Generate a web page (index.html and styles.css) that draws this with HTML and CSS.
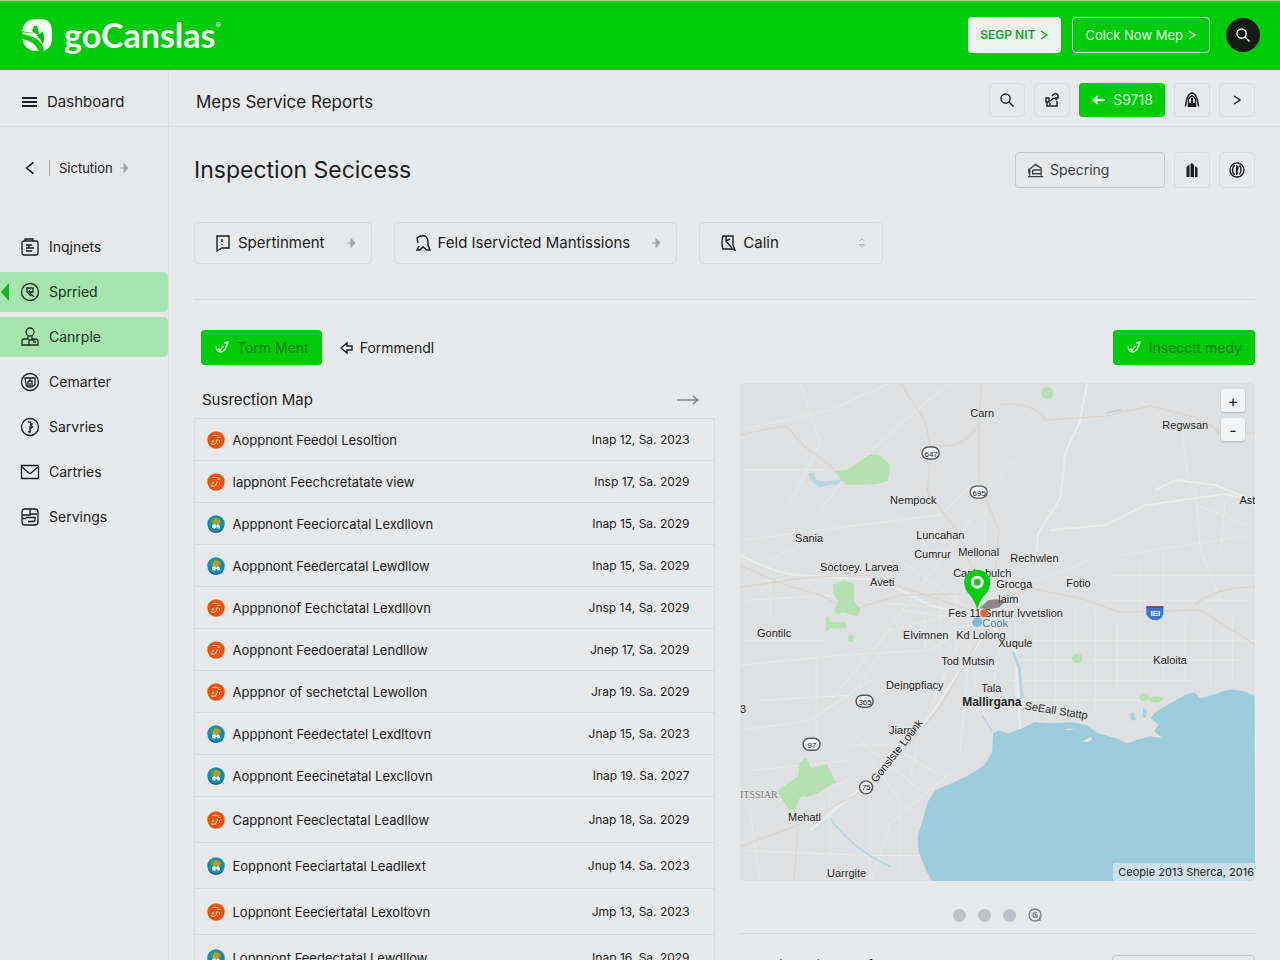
FILE: index.html
```html
<!DOCTYPE html>
<html lang="en">
<head>
<meta charset="utf-8">
<meta name="viewport" content="width=device-width, initial-scale=1">
<title>Meps Service Reports</title>
<link rel="stylesheet" href="styles.css">
</head>
<body>
<svg class="sprite" aria-hidden="true">
  <symbol id="search" viewBox="0 0 16 16"><circle cx="6.6" cy="6.6" r="4.6"/><path d="M10 10l4.5 4.5"/></symbol>
  <symbol id="chevron" viewBox="0 0 10 12"><path d="M2 2l6 4-6 4"/></symbol>
  <symbol id="caret" viewBox="0 0 10 12"><path d="M1 6h7M5 1.5v9L9 6z" fill="currentColor"/></symbol>
  <symbol id="orange" viewBox="0 0 18 18"><circle cx="9" cy="9" r="8.7" fill="#ee5208"/><path d="M5.500 4.500q4-.8 6 .8M4 12.500q3 2 5-.5l1.500-4M11 6.500l2.500-.5M12.500 9v3M7 9l-2 2" fill="none" stroke="#ffd0b4" stroke-width="1.200"/></symbol>
  <symbol id="globe" viewBox="0 0 18 18"><circle cx="9" cy="9" r="8.7" fill="#0e8fa8"/><path d="M1 12q8 9 16 0-2 5.500-8 5.700Q3 17.500 1 12z" fill="#1356a8"/><path d="M5 8q0-4 4-5 4 0 5 4l-3 3H7z" fill="#b79a2c"/><path d="M3 6q2-4 5-4L6 6l-1 4z" fill="#2fa56a"/><path d="M5 13v-3l3-1 1 2 2-2 2 2v2l-2 1-1-2h-1l-1 2z" fill="#e4f6ff"/></symbol>
  <symbol id="tick" viewBox="0 0 16 16"><path d="M2 6.500q1 6 5 5.500 5-1 6-9M10 3l4-1-1 4M4 9l3 1M5.500 11l4-5"/></symbol>
</svg>

<header class="topbar">
  <a class="brand" href="#" aria-label="goCanslas">
    <svg class="brand-mark" viewBox="0 0 30 32">
      <path d="M0 12Q2 0 14 0h4q12 0 12 13v6q0 10-8 13-1-9-9-13-6-3-13-4l1-2q6 2 10 1-7-1-11-2z" fill="#f3fff3"/>
      <path d="M10 12l2-5q3-1 4 2l1 6q-4 1-7-3z" fill="#07c40f"/>
      <path d="M14 16q5-1 7-4 2 8 0 13-2-5-7-9z" fill="#07b90f"/>
      <path d="M0 20q11 1 17 12-14 1-17-12z" fill="#f3fff3"/>
    </svg>
    <span class="brand-name">goCanslas</span><span class="brand-reg">®</span>
  </a>
  <nav class="top-actions" aria-label="Account">
    <button class="top-btn solid">SEGP NIT <svg class="chev"><use href="#chevron"/></svg></button>
    <button class="top-btn outline">Colck Now Mep <svg class="chev"><use href="#chevron"/></svg></button>
    <button class="round" aria-label="Search"><svg class="ico16"><use href="#search"/></svg></button>
  </nav>
</header>

<div class="shell">
  <aside class="sidebar">
    <button class="side-head">
      <svg class="burger" viewBox="0 0 15 12"><path d="M0 2h15M0 6h15M0 10h15"/></svg>Dashboard
    </button>
    <div class="crumb">
      <button class="back" aria-label="Back"><svg viewBox="0 0 10 14"><path d="M8 2L2 7l6 5"/></svg></button>
      <a href="#">Sictution <svg class="caret"><use href="#caret"/></svg></a>
    </div>
    <nav class="menu" aria-label="Sections">
      <a href="#"><svg viewBox="0 0 20 20"><path d="M4 4h12q2 0 2 2v10q0 2-2 2H4q-2 0-2-2V6q0-2 2-2zM5 4V2h8v2M6 8h6M6 11h8M6 14h6M9 8v3"/></svg>Inqjnets</a>
      <a class="on marked" href="#"><svg viewBox="0 0 20 20"><circle cx="10" cy="10" r="8.500"/><path d="M6 6h7v4H9l5 5M7 6v4l4 4M9.500 10V8"/></svg>Sprried</a>
      <a class="on" href="#"><svg viewBox="0 0 20 20"><circle cx="10" cy="5" r="4"/><path d="M8 9v3H4q-2 0-2 2v4h16v-4q0-2-3-2h-3V9M9 18v-5h6M13 15h3"/></svg>Canrple</a>
      <a href="#"><svg viewBox="0 0 20 20"><circle cx="10" cy="10" r="8.500"/><path d="M5 6h10v6q-1 3-5 3t-4-3zM8 9v5M8 9h4v5M10 6v3M10 11v4"/></svg>Cemarter</a>
      <a href="#"><svg viewBox="0 0 20 20"><circle cx="10" cy="10" r="8.500"/><path d="M8 5h2.500v3l2 2-3 2M10 9v7M8 15l3-1M12 6v2"/></svg>Sarvries</a>
      <a href="#"><svg viewBox="0 0 20 20"><path d="M1.500 3.500h17v13h-17zM2 5l7 6q1 1 2 0l7-6"/></svg>Cartries</a>
      <a href="#"><svg viewBox="0 0 20 20"><path d="M5 2h10q3 0 3 3v10q0 3-3 3H5q-3 0-3-3V5q0-3 3-3zM2 8h8V2M10 7h7M6 10.500h9v2q0 2-2 2H8M2 11.500h4"/></svg>Servings</a>
    </nav>
  </aside>

  <main class="main">
    <div class="subbar">
      <h2>Meps Service Reports</h2>
      <div class="tools">
        <button class="sq" aria-label="Find"><svg class="ico16"><use href="#search"/></svg></button>
        <button class="sq" aria-label="Share"><svg class="ico16" viewBox="0 0 16 16"><path d="M2 6h3v4H2zM3 10v4h10V9M8 4q3-4 6-1v3h-3M6 9l4-3 3 2M6 13v-2"/></svg></button>
        <button class="count"><svg viewBox="0 0 16 12"><path d="M1 6l6-5v4h8v2H7v4z"/></svg>S9718</button>
        <button class="sq" aria-label="Alerts"><svg class="ico16" viewBox="0 0 16 16"><path d="M1.500 14.500Q3 1 8 1t6.500 13.500M4.500 13V7q3.500-6 7 0v6"/><path d="M4.500 11h7l1 4h-9zM7 6h2v5H7z" fill="currentColor" stroke="none"/></svg></button>
        <button class="sq" aria-label="Next"><svg class="chev"><use href="#chevron"/></svg></button>
      </div>
    </div>

    <div class="content">
      <div class="title-row">
        <h1>Inspection Secicess</h1>
        <div class="tools">
          <label class="field">
            <svg viewBox="0 0 18 16"><path d="M1 15h16M3 14V7l6-5 6 4v8M3 7H2v5M6 8h8M6 8v4h9"/></svg>
            <input type="text" value="Specring" aria-label="Filter">
          </label>
          <button class="sq" aria-label="Library"><svg class="ico16" viewBox="0 0 16 16"><path d="M2.500 15V5l3-2.500V15zM6.500 15V2L8 1l2 2v12zM11 15V4l2.500 2v9z" fill="currentColor" stroke="none"/></svg></button>
          <button class="sq" aria-label="Info"><svg class="ico16" viewBox="0 0 16 16"><circle cx="8" cy="8" r="7"/><path d="M5.500 3q-4 5 0 10M10.500 3.500q3 4 0 9"/><path d="M7 3l2.500 1v3l-1 2 .5 3L7 13z" fill="currentColor" stroke="none"/></svg></button>
        </div>
      </div>

      <div class="filters">
        <button class="pick"><svg viewBox="0 0 16 18"><path d="M2 2h12v12H7l-5 3zM7 5v3M7 10v1"/></svg><span>Spertinment</span><svg class="caret"><use href="#caret"/></svg></button>
        <button class="pick"><svg viewBox="0 0 16 18"><path d="M3 9L2 4q3-3 8-2 3 2 3 6v3l2 5h-3l-4-3-3 3H2l2-4"/></svg><span>Feld Iservicted Mantissions</span><svg class="caret"><use href="#caret"/></svg></button>
        <label class="pick wide"><svg viewBox="0 0 16 18"><path d="M3 2h10v9l2 5-3-1H3q-2-6 0-13zM6 2v5l6 7M6 7l4-2"/></svg><select aria-label="Calin"><option>Calin</option></select><svg class="caret" viewBox="0 0 10 14"><path d="M2 5l3-3 3 3M2 9l3 3 3-3z"/></svg></label>
      </div>

      <div class="action-row">
        <button class="go"><svg class="ico16"><use href="#tick"/></svg>Torm Ment</button>
        <button class="plain"><svg viewBox="0 0 14 14"><path d="M1 7l6-5v3h5v4H7v3z"/></svg>Formmendl</button>
        <button class="go end"><svg class="ico16"><use href="#tick"/></svg>Insecctt medy</button>
      </div>

      <div class="columns">
        <section class="list">
          <div class="list-head">
            <h3>Susrection Map</h3>
            <svg viewBox="0 0 24 12"><path d="M1 6h20"/><path d="M17 2l5 4-5 4"/></svg>
          </div>
          <table>
            <tbody>
              <tr><td><svg><use href="#orange"/></svg></td><td>Aoppnont Feedol Lesoltion</td><td>Inap 12, Sa. 2023</td></tr>
              <tr><td><svg><use href="#orange"/></svg></td><td>Iappnont Feechcretatate view</td><td>Insp 17, Sa. 2029</td></tr>
              <tr><td><svg><use href="#globe"/></svg></td><td>Apppnont Feeciorcatal Lexdllovn</td><td>Inap 15, Sa. 2029</td></tr>
              <tr><td><svg><use href="#globe"/></svg></td><td>Aoppnont Feedercatal Lewdllow</td><td>Inap 15, Sa. 2029</td></tr>
              <tr><td><svg><use href="#orange"/></svg></td><td>Apppnonof Eechctatal Lexdllovn</td><td>Jnsp 14, Sa. 2029</td></tr>
              <tr><td><svg><use href="#orange"/></svg></td><td>Aoppnont Feedoeratal Lendllow</td><td>Jnep 17, Sa. 2029</td></tr>
              <tr><td><svg><use href="#orange"/></svg></td><td>Apppnor of sechetctal Lewollon</td><td>Jrap 19. Sa. 2029</td></tr>
              <tr><td><svg><use href="#globe"/></svg></td><td>Apppnont Feedectatel Lexdltovn</td><td>Jnap 15, Sa. 2023</td></tr>
              <tr><td><svg><use href="#globe"/></svg></td><td>Aoppnont Eeecinetatal Lexcllovn</td><td>Inap 19. Sa. 2027</td></tr>
              <tr class="tall"><td><svg><use href="#orange"/></svg></td><td>Cappnont Feeclectatal Leadllow</td><td>Jnap 18, Sa. 2029</td></tr>
              <tr class="tall"><td><svg><use href="#globe"/></svg></td><td>Eoppnont Feeciartatal Leadllext</td><td>Jnup 14. Sa. 2023</td></tr>
              <tr class="tall"><td><svg><use href="#orange"/></svg></td><td>Loppnont Eeeciertatal Lexoltovn</td><td>Jmp 13, Sa. 2023</td></tr>
              <tr class="tall"><td><svg><use href="#globe"/></svg></td><td>Loppnont Feedectatal Lewdllow</td><td>Inap 16, Sa. 2029</td></tr>
            </tbody>
          </table>
        </section>

        <section class="map-col">
          <div class="map">
            <svg class="map-art" viewBox="740 383 515 498" role="img" aria-label="Map">
              <rect x="740" y="383" width="515" height="498" fill="#dfe0e1"/>
              <g class="minor">
                <path d="M740 430l90-20 60-27M820 510l30-40 60-55 40-32M740 540l120-15 80-10 40-40M770 620v-60l60-30M740 665l100-10 90-5 40-25M760 700l90-5 30-40M740 730l70-10 60-40M816 745v-90M850 745h40l50 30M900 870v-70l-30-40M760 881l-10-70M740 850l130 5h50M800 383l20 60-30 60M870 883l20-60 60-50M880 640l90-120M830 700l60-70 80-20M850 600l120 10M900 560l70 50M1005 620l-15 80M960 640l-40 90-10 50M970 640l-10 110M985 560v-70l30-30M990 740l-20-80M920 790l-60-50"/>
                <path d="M1015 620v90M1035 610v110M1055 610v100M1075 605v110M1095 610v100M1117 620v70M1140 560v120M1163 550v130M1185 620v60M1210 620v65M1232 620v60M1000 640h254M1010 660h230M1000 680h190M1020 700h120M1100 600h150M1110 575h145M1120 555l130-20M1195 485l5 65 20 50M1225 500l-5 50M1182 430l5 45 10 30 50 20"/>
                <path d="M745 470h80M760 580h70M745 600l90-5M750 770l100-10M780 800l70-20M830 760v100M870 780v100M745 640h80M900 610l80 10M900 640l70-10M940 600v60M955 590v60M925 610v40M1010 590l80-30"/>
              </g>
              <g class="mid">
                <path d="M1087 383l-8 40-14 30-5 45-22 35-3 30M1050 530l55-5 40-20 30-4 50-7 30 7M1155 490l20-10 40 5 40 16M740 555q40 20 60 20l80 5 50 25 40 10M985 620l30 30 5 80M980 640l-60 90-50 50-60 50"/>
              </g>
              <g class="major">
                <path d="M740 435Q770 428 786 426L805 447 830 465 845 483M900 383l25 38 6 30-4 40 30 40 20 50M935 445q30 5 44-22l2-40M979 425v60l20 45-4 40M740 565l40 18 40 12 30 15 50-15 60-1M740 587l70-10 60-2 40 15 60 20M990 610l40-22 50 10 40 14 80-2 54 34M1254 587q-40 0-60 18M740 846l60-22 70-37 70-80 40-70M798 828l-4 50"/>
                <path d="M1000 405q30-5 45 15l60-4 45-10 40 10q20 5 28 17h36"/>
              </g>
              <g fill="#b5e0b0">
                <path d="M835 471l12-1 22-15 9-1 12 11-2 16-12 3-30 1z"/>
                <path d="M833 584l12-4 9 4v18l6 6-2 8-16-4-4 2-4-4 4-8-4-8zM826 617l3-1 1 6h16v6h-17v2h-3zM849 634l5 2-2 6-4-2z"/>
                <path d="M778 790l20-14 2-14 6-5 5 11 16-4 9 18-19 11-11 4q-4-4-8 4l-3 10-6-2-7-10z"/>
                <circle cx="1047" cy="393" r="6"/><circle cx="1077" cy="658" r="5"/><ellipse cx="1144" cy="697" rx="5" ry="4"/><ellipse cx="1156" cy="699" rx="7" ry="3"/>
              </g>
              <path d="M808 474l6-2 2 7q5 4 13 2l14-2-5 5-18 3-7-4z" fill="#b3d7e5"/>
              <g fill="none" stroke="#b3d5e3"><path d="M830 818q24 32 60 48M1105 413l16-3"/><path stroke-width="3" d="M1013 652l6 16 3 30"/><path d="M982 715l10 16"/></g>
              <path d="M1254 696Q1240 688 1226 690L1214 694 1200 698 1194 692 1184 695 1172 702 1156 711 1150 718 1158 724 1154 731 1162 738 1150 736 1136 740 1127 743 1116 738 1108 736 1098 733 1086 725 1072 722 1050 723 1034 722 1022 728 1008 733 998 730 993 733 992 752 984 765 970 774 954 782 935 790 928 801 923 818 918 834 918 850 926 870 932 881H1255z" fill="#9dcddb"/>
              <path d="M1082 741l8-4 2 2-5 3zM1062 729l12-1-5 2z" fill="#dfe0e1"/>
              <path d="M1129 714l4-2 3 8-5 0zM1143 708l4 2-2 8-3-2z" fill="#a9d0dc"/>
              <g class="shield">
                <rect x="922" y="447" width="17" height="12" rx="6"/><text x="931" y="457">647</text>
                <rect x="970" y="486" width="17" height="12" rx="6"/><text x="979" y="496">695</text>
                <rect x="856" y="695" width="17" height="12" rx="6"/><text x="865" y="705">365</text>
                <rect x="803" y="738" width="17" height="12" rx="6"/><text x="812" y="748">97</text>
                <circle cx="866" cy="787" r="6.500"/><text x="866" y="790">75</text>
              </g>
              <path d="M1146 606h17v8q-2 6-8 6t-9-6z" fill="#3578d8"/><path d="M1146 606h17v2h-17z" fill="#7b4668"/><text class="inter" x="1155" y="616">IEI</text>
              <g class="labels">
                <text x="970" y="417">Carn</text><text x="1162" y="429">Regwsan</text><text x="1239" y="504">Ast</text>
                <text x="890" y="504">Nempock</text><text x="795" y="542">Sania</text><text x="916" y="539">Luncahan</text>
                <text x="914" y="558">Cumrur</text><text x="958" y="556">Mellonal</text><text x="1010" y="562">Rechwlen</text>
                <text x="820" y="571">Soctoey. Larvea</text><text x="870" y="586">Aveti</text><text x="953" y="577">Canle bulch</text>
                <text x="996" y="588">Grocga</text><text x="1066" y="587">Fotio</text><text x="998" y="603">laim</text>
                <text x="948" y="617">Fes 11 Snrtur Ivvetslion</text><text x="982" y="627" fill="#3b8aa6">Cook</text>
                <text x="903" y="639">Elvimnen</text><text x="956" y="639">Kd Lolong</text><text x="998" y="647">Xuqule</text>
                <text x="757" y="637">Gontilc</text><text x="941" y="665">Tod Mutsin</text><text x="1153" y="664">Kaloita</text>
                <text x="886" y="689">Deingpfiacy</text><text x="981" y="692">Tala</text><text class="bold" x="962" y="706">Mallirgana</text>
                <text x="740" y="713">3</text><text x="889" y="734">Jiarnt</text>
                <text x="788" y="821">Mehatl</text><text x="827" y="877">Uarrgite</text>
                <text class="faint" x="740" y="798">ITSSIAR</text>
                <text transform="translate(876 783) rotate(-52)">Gonslste Lounk</text>
                <text transform="translate(1024 709) rotate(9)">SeEall Stattp</text>
              </g>
              <path d="M979 608l9-8 8-1 9 2-6 6-10 2z" fill="#5a4a50" opacity=".6"/><circle cx="984" cy="613" r="4" fill="#e06a3a"/><circle cx="977" cy="622" r="5" fill="#5fb6d6" opacity=".8"/>
              <path d="M977 609q-3-10-9-16-4-5-4-11a13 12.500 0 0 1 26 0q0 6-4 11-6 6-9 16z" fill="#06cc10"/><circle cx="977" cy="582" r="5" fill="#35b53a" stroke="#e9ffe9" stroke-width="3"/>
            </svg>
            <div class="zoom"><button aria-label="Zoom in">+</button><button aria-label="Zoom out">-</button></div>
            <span class="credit">Ceople 2013 Sherca, 2016</span>
          </div>
          <div class="dots">
            <i></i><i></i><i></i>
            <svg viewBox="0 0 14 14"><circle cx="7" cy="7" r="6"/><path d="M9 5q-4-1-4 2t4 2V7H7M12 8v4H9"/></svg>
          </div>
          <div class="next">
            <h3>Suction ultimlostts fast opont all</h3>
            <button aria-label="More"></button>
          </div>
        </section>
      </div>
    </div>
  </main>
</div>
</body>
</html>
```
FILE: styles.css
```css
* { box-sizing: border-box; }
body {
  margin: 0;
  height: 100vh;
  display: flex;
  flex-direction: column;
  overflow: hidden;
  background: #e8e9eb;
  color: #1b1d20;
  font: 14px/20px Inter, "Noto Sans", sans-serif;
}
h1, h2, h3 { margin: 0; font-weight: 400; }
button, input, select { font: inherit; color: inherit; margin: 0; padding: 0; border: 0; background: none; }
button { display: inline-flex; align-items: center; justify-content: center; cursor: pointer; white-space: nowrap; }
a { color: inherit; text-decoration: none; }
svg { flex: none; fill: none; stroke: currentColor; stroke-width: 1.4; }
.sprite { position: absolute; width: 0; height: 0; }
.ico16 { width: 16px; height: 16px; }
.chev { width: 10px; height: 12px; }
.caret { width: 10px; height: 12px; color: #a3a5a9; stroke-width: 1; }

.topbar {
  flex: none;
  height: 70px;
  padding: 0 20px 2px 22px;
  display: flex;
  align-items: center;
  justify-content: space-between;
  background: #00cb0b;
  border-top: 1px solid #8fdc92;
}
.brand { display: flex; align-items: center; color: #effff0; }
.brand-mark { width: 30px; height: 32px; margin-right: 12px; stroke: none; }
.brand-name { font: 700 34px/40px Lato, sans-serif; }
.brand-reg { font-size: 8px; align-self: flex-start; }
.top-actions { display: flex; align-items: center; gap: 11px; }
.top-btn { height: 36px; border-radius: 4px; gap: 4px; font-size: 13px; }
.top-btn.solid { padding: 0 12px; background: #eff3f0; color: #12a91d; font-size: 12px; font-weight: 600; }
.top-btn.outline { padding: 0 12px; border: 1px solid #b5f2b8; color: #e3ffe4; }
.round { width: 34px; height: 34px; margin-left: 5px; border-radius: 50%; background: #151a17; color: #fff; }

.shell { flex: 1; min-height: 0; display: grid; grid-template-columns: 169px minmax(0, 1fr); }
.sidebar { border-right: 1px solid #dcdee0; }
.side-head {
  width: 100%;
  height: 57px;
  padding: 7px 0 0 22px;
  justify-content: flex-start;
  gap: 10px;
  border-bottom: 1px solid #dcdee0;
  font-size: 15px;
}
.burger { width: 15px; height: 12px; stroke-width: 2; }
.crumb { height: 82px; padding: 0 24px; display: flex; align-items: center; gap: 13px; font-size: 13px; }
.back svg { width: 12px; height: 16px; }
.crumb a { display: flex; align-items: center; gap: 6px; padding-left: 9px; border-left: 1px solid #a5a7ab; line-height: 16px; }
.menu { padding-top: 18px; display: grid; gap: 5px; }
.menu a { position: relative; height: 40px; padding-left: 20px; display: flex; align-items: center; gap: 9px; border-radius: 0 5px 5px 0; }
.menu svg { width: 20px; height: 20px; stroke-width: 1.3; }
.menu .on { background: #a6e5af; color: #14331a; }
.menu .marked::before {
  content: "";
  position: absolute;
  left: 1px;
  border: solid transparent;
  border-width: 9px 8px 9px 0;
  border-right-color: #12b522;
}

.main { min-width: 0; overflow-y: auto; scrollbar-width: none; }
.subbar { height: 57px; padding: 4px 25px 0 27px; display: flex; align-items: center; justify-content: space-between; border-bottom: 1px solid #dcdee0; }
.subbar h2 { padding-top: 3px; font-size: 17px; }
.tools { display: flex; gap: 9px; }
.sq { width: 36px; height: 34px; border: 1px solid #d9dbde; border-radius: 5px; }
.count { width: 86px; gap: 7px; border-radius: 4px; background: #00cb0b; color: #dcffdd; }
.count svg { width: 15px; height: 12px; fill: #f2fff2; stroke: none; }

.content { padding: 25px 25px 0; }
.title-row { display: flex; justify-content: space-between; align-items: center; }
.title-row h1 { font-size: 23px; line-height: 30px; }
.title-row .sq, .field { height: 36px; }
.field { width: 150px; padding: 0 11px; display: flex; align-items: center; gap: 6px; border: 1px solid #c6c8cc; border-radius: 4px; color: #3c3e42; }
.field svg { width: 17px; height: 16px; }
.field input { width: 100%; min-width: 0; outline: 0; }
.filters { margin-top: 34px; display: flex; flex-wrap: wrap; gap: 22px; font-size: 15px; }
.pick { height: 42px; padding: 0 15px 0 20px; display: inline-flex; align-items: center; gap: 7px; border: 1px solid #d8dadd; border-radius: 5px; }
.pick > svg:first-child { width: 16px; height: 18px; }
.pick .caret { margin-left: 14px; }
.pick.wide { width: 184px; }
.pick select { flex: 1; appearance: none; outline: 0; }
.action-row { margin-top: 35px; padding: 30px 0 0 7px; display: flex; gap: 18px; border-top: 1px solid #d6d8db; }
.go { height: 35px; padding: 0 13px; gap: 7px; border-radius: 4px; background: #00cb0b; color: #087c12; }
.go svg { color: #d7ffd9; }
.go.end { margin-left: auto; }
.plain { gap: 6px; }
.plain svg { width: 14px; height: 14px; }

.columns { margin-top: 18px; display: grid; grid-template-columns: minmax(0, 1.01fr) minmax(0, 1fr); gap: 25px; }
.list-head { height: 35px; padding: 0 15px 2px 8px; display: flex; align-items: center; justify-content: space-between; }
.list-head h3 { font-size: 15px; }
.list-head svg { width: 24px; height: 12px; color: #808286; }
table { width: 100%; border-collapse: collapse; font-size: 13px; }
tbody { border: 1px solid #d8dadd; }
tr { height: 42px; border-top: 1px solid #d8dadd; }
.tall { height: 46px; }
td { padding: 0; }
td:first-child { width: 38px; padding-left: 12px; }
td:last-child { padding-right: 24px; text-align: right; font-size: 12px; }
td svg { display: block; width: 18px; height: 18px; stroke: none; }

.map { position: relative; border-radius: 5px; overflow: hidden; }
.map-art { display: block; width: 100%; height: auto; stroke: none; }
.minor { fill: none; stroke: #e7e8e8; stroke-width: 1; }
.mid { fill: none; stroke: #ebecec; stroke-width: 2; }
.major { fill: none; stroke: #dbd5cd; stroke-width: 1.3; }
.labels { font: 11px "Liberation Sans", sans-serif; fill: #222; paint-order: stroke; stroke: #ebecec; stroke-width: 1px; }
.labels .bold { font-weight: 700; font-size: 12px; }
.labels .faint { font: 10px "Liberation Serif", serif; fill: #777; }
.shield { fill: #f2f3f3; stroke: #55585d; }
.shield text { font: 8px "Liberation Sans", sans-serif; fill: #222; stroke: none; text-anchor: middle; }
.inter { font: 700 8px "Liberation Sans", sans-serif; fill: #fff; text-anchor: middle; }
.zoom { position: absolute; top: 6px; right: 10px; display: grid; gap: 6px; }
.zoom button { width: 24px; height: 23px; border-radius: 3px; background: #f3f4f5; box-shadow: 0 1px 2px #0003; font-size: 16px; }
.credit { position: absolute; right: 0; bottom: 0; padding: 0 1px 0 5px; background: #cfe1e8; font-size: 11px; line-height: 18px; }
.dots { height: 53px; padding-top: 16px; display: flex; align-items: center; justify-content: center; gap: 12px; border-bottom: 1px solid #d6d8db; }
.dots i { width: 13px; height: 13px; border-radius: 50%; background: #bfc1c7; }
.dots svg { width: 14px; height: 14px; color: #85878b; }
.next { padding: 21px 0 0 12px; display: flex; justify-content: space-between; }
.next h3 { font-size: 13px; }
.next button { width: 143px; height: 34px; border: 1px solid #c6c8cc; border-radius: 4px; }
```
